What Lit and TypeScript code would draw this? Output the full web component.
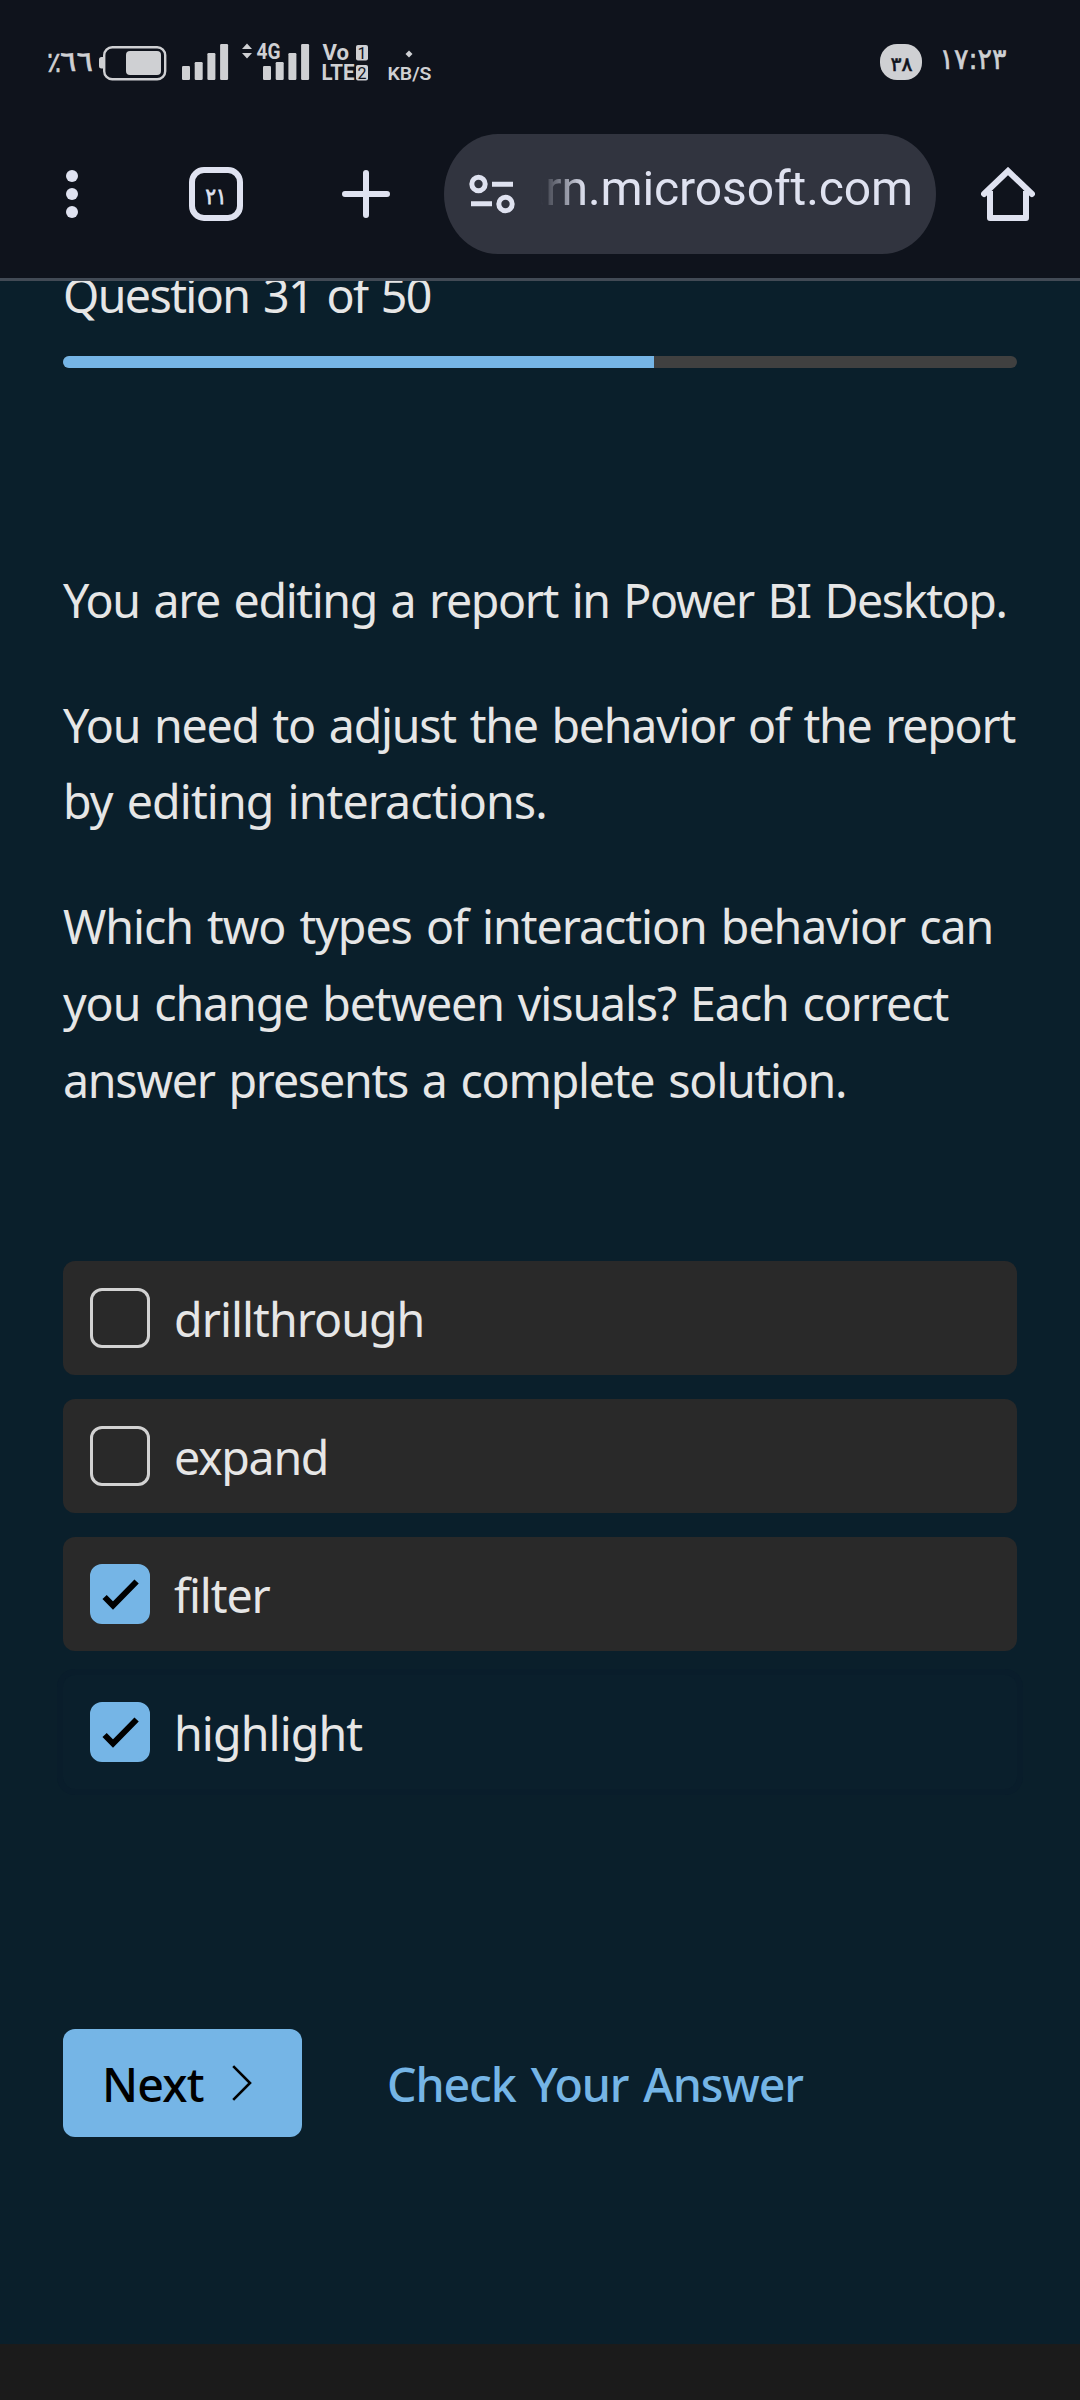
import { LitElement, html, css, svg } from "lit";
import { classMap } from "lit/directives/class-map.js";

interface Line { text: string; spacing: number; }
interface Option extends Line { checked: boolean; focused?: boolean; }

const QUESTION: Line[][] = [
  [{ text: "You are editing a report in Power BI Desktop.", spacing: -1.38 }],
  [
    { text: "You need to adjust the behavior of the report", spacing: -1.25 },
    { text: "by editing interactions.", spacing: -0.9 },
  ],
  [
    { text: "Which two types of interaction behavior can", spacing: -1.03 },
    { text: "you change between visuals? Each correct", spacing: -1.11 },
    { text: "answer presents a complete solution.", spacing: -1.24 },
  ],
];

const OPTIONS: Option[] = [
  { text: "drillthrough", spacing: -0.95, checked: false },
  { text: "expand", spacing: -1.3, checked: false },
  { text: "filter", spacing: -1.1, checked: true },
  { text: "highlight", spacing: -0.88, checked: true, focused: true },
];

class StatusBar extends LitElement {
  static styles = css`
    :host { display: block; height: 120px; }
    svg { display: block; }
    .ink { fill: #cfd0d3; }
    .line { fill: none; stroke: #cfd0d3; stroke-width: 2.4; }
    .dark { fill: #0f131c; }
    text { font-family: Roboto, "Liberation Sans", sans-serif; }
    .digits { font-family: "DejaVu Sans", sans-serif; }
    .heavy { stroke: #cfd0d3; stroke-width: 0.6; }
    .dark.digits { stroke: #0f131c; stroke-width: 0.6; }
    .bold { font-weight: 700; }
    .medium { font-weight: 600; }
  `;

  private bars(x: number) {
    const tops = [66, 62, 53, 44];
    return tops.map((top, i) => svg`<rect class="ink" x=${x + i * 12.7} y=${top} width="8" height=${80 - top} rx="1.2"/>`);
  }

  render() {
    return html`<svg width="1080" height="120" viewBox="0 0 1080 120">
      <g class="ink">
        <text class="digits heavy" x="47" y="72" font-size="28" textLength="14" lengthAdjust="spacingAndGlyphs">٪</text>
        <text class="digits heavy" x="60" y="70.500" font-size="28" textLength="33" lengthAdjust="spacingAndGlyphs">٦٦</text>
        <path d="M103 57h-1.500a2.500 2.500 0 0 0-2.500 2.500v6.500a2.500 2.500 0 0 0 2.500 2.500h1.500z"/>
        <rect x="126" y="51" width="35" height="24" rx="4"/>
        <path d="M242 49l5-5.500 5 5.500zM242 53h10l-5 5.500z"/>
        <text class="bold" x="256.500" y="59" font-size="21.500" textLength="24" lengthAdjust="spacingAndGlyphs">4G</text>
        <text class="bold" x="322.500" y="60" font-size="21.500" textLength="26.500" lengthAdjust="spacingAndGlyphs">Vo</text>
        <text class="bold" x="321.500" y="80" font-size="21.500" textLength="33" lengthAdjust="spacingAndGlyphs">LTE</text>
        <rect x="356" y="45" width="12" height="15.500" rx="2"/>
        <rect x="356" y="65" width="12" height="15.500" rx="2"/>
        <path d="M409 50.500l3.500 3.500-3.500 3.500-3.500-3.500z"/>
        <text class="medium" x="387.500" y="79.500" font-size="19" textLength="44" lengthAdjust="spacingAndGlyphs">KB/S</text>
        <rect x="880" y="44" width="42" height="36" rx="17"/>
        <text class="digits heavy" x="939.500" y="69" font-size="29" textLength="67" lengthAdjust="spacingAndGlyphs">١٧:٢٣</text>
      </g>
      <rect class="line" x="104.200" y="47.200" width="61" height="32" rx="8"/>
      ${this.bars(182)} ${this.bars(263)}
      <text class="dark" x="362" y="58.500" font-size="16" text-anchor="middle">1</text>
      <text class="dark" x="362" y="78.500" font-size="16" text-anchor="middle">2</text>
      <text class="dark digits" x="890.500" y="71" font-size="20" textLength="22" lengthAdjust="spacingAndGlyphs">٣٨</text>
    </svg>`;
  }
}
customElements.define("status-bar", StatusBar);

class BrowserBar extends LitElement {
  static styles = css`
    :host {
      box-sizing: border-box; display: flex; align-items: flex-start;
      height: 161px; padding-top: 14px; border-bottom: 3px solid #424a55;
    }
    .icon { height: 120px; display: flex; align-items: center; }
    svg { display: block; fill: none; stroke: #dfe2f0; stroke-width: 6; }
    .solid { fill: #dfe2f0; stroke: none; }
    .menu { margin-left: 66px; }
    .tabs { margin-left: 111px; }
    .plus { margin-left: 99px; }
    .pill {
      box-sizing: border-box; width: 492px; height: 120px; margin-left: 54px; padding-left: 24px;
      display: flex; align-items: center; background: #31343f; border-radius: 54px / 60px;
    }
    .tune { stroke-width: 5; }
    .url {
      width: 372px; margin-left: 25px; padding-bottom: 10px; overflow: hidden;
      display: flex; justify-content: flex-end; white-space: nowrap;
      font: 48px/60px Roboto, "Liberation Sans", sans-serif; letter-spacing: -0.1px; color: #dfe2f0;
      -webkit-mask-image: linear-gradient(to right, transparent 0, #000 44px);
      mask-image: linear-gradient(to right, transparent 0, #000 44px);
    }
    .home { margin-left: 45px; }
    .count { font: 22px "DejaVu Sans", sans-serif; fill: #dfe2f0; stroke: #dfe2f0; stroke-width: 0.8; }
  `;
  render() {
    return html`
      <div class="icon menu"><svg class="solid" width="12" height="54" viewBox="0 0 12 54">
        <circle cx="6" cy="9" r="6"/><circle cx="6" cy="27" r="6"/><circle cx="6" cy="45" r="6"/></svg></div>
      <div class="icon tabs"><svg width="54" height="54" viewBox="0 0 54 54">
        <rect x="3" y="3" width="48" height="48" rx="12"/>
        <text class="count" x="16.500" y="36.500" textLength="21" lengthAdjust="spacingAndGlyphs">٢١</text></svg></div>
      <div class="icon plus"><svg width="48" height="48" viewBox="0 0 48 48">
        <path stroke-linecap="round" d="M24 3v42M3 24h42"/></svg></div>
      <div class="pill">
        <svg class="tune" width="48" height="40" viewBox="0 0 48 40">
          <circle cx="10.500" cy="10" r="6.700"/><circle cx="37.500" cy="30" r="6.700"/>
          <path d="M24 10.200h21M3 29.800h21"/></svg>
        <div class="url">arn.microsoft.com</div>
      </div>
      <div class="icon home"><svg width="54" height="54" viewBox="0 0 54 54">
        <path stroke-linejoin="round" d="M9 24v27h36V24"/>
        <path stroke-linecap="round" d="M3 27L27 4 51 27"/></svg></div>`;
  }
}
customElements.define("browser-bar", BrowserBar);

class AnswerOption extends LitElement {
  static properties = { option: { attribute: false } };
  declare option: Option;
  static styles = css`
    :host { display: block; }
    .card {
      box-sizing: border-box; height: 114px; padding-left: 27px; border-radius: 12px;
      display: flex; align-items: center; gap: 24px; background: #292929;
    }
    .focused { background: #0a1f2c; box-shadow: 0 0 0 6px #091d2b; }
    .box {
      box-sizing: border-box; width: 60px; height: 60px; border: 3px solid #d2d2d2; border-radius: 12px;
    }
    .checked { border-color: #75b5e6; background: #75b5e6; }
    svg { display: block; width: 54px; height: 54px; fill: none; stroke: #000; stroke-width: 6; }
    .label { padding-top: 4px; white-space: nowrap; }
  `;
  render() {
    const o = this.option;
    return html`<div class=${classMap({ card: true, focused: !!o.focused })}>
      <div class=${classMap({ box: true, checked: o.checked })}>
        ${o.checked ? html`<svg viewBox="0 0 54 54"><path d="M11.600 30l8.400 8.500L43.600 14.500"/></svg>` : ""}
      </div>
      <div class="label" style="letter-spacing:${o.spacing}px">${o.text}</div>
    </div>`;
  }
}
customElements.define("answer-option", AnswerOption);

class AppRoot extends LitElement {
  static styles = css`
    :host {
      display: flex; flex-direction: column; width: 1080px; height: 2400px; overflow: hidden;
      background: #0f131c; color: #e6e6e6;
      font: 46.5px/76.8px "Noto Sans", "Open Sans", sans-serif; word-spacing: 3px;
    }
    main { flex: 1; overflow: hidden; padding: 0 63px; background: #0a1f2b; }
    .count { margin-top: -24px; letter-spacing: -1.6px; }
    .track { height: 12px; margin-top: 22.2px; border-radius: 6px; overflow: hidden; background: #404040; }
    .fill { height: 100%; background: #75b5e6; }
    .question { display: flex; flex-direction: column; gap: 48px; margin-top: 193.8px; }
    .line { white-space: nowrap; }
    .options { display: grid; gap: 24px; margin-top: 142.2px; }
    .actions { display: flex; align-items: center; margin-top: 240px; font-weight: 500; }
    .next {
      box-sizing: border-box; width: 239px; height: 108px; padding-left: 39px; border-radius: 12px;
      display: flex; align-items: center; background: #75b5e6; color: #000; letter-spacing: -0.8px;
    }
    .next span { width: 102px; padding-top: 4px; }
    .next svg { margin-left: 28px; fill: none; stroke: #000; stroke-width: 2.6; }
    .check { margin-left: 85px; padding-top: 4px; color: #75b5e6; letter-spacing: -1.1px; word-spacing: 4px; }
    footer { height: 56px; background: #1b1b1b; }
  `;
  render() {
    return html`
      <status-bar></status-bar>
      <browser-bar></browser-bar>
      <main>
        <div class="count">Question 31 of 50</div>
        <div class="track"><div class="fill" style="width:62%"></div></div>
        <div class="question">
          ${QUESTION.map((p) => html`<div>${p.map((l) => html`<div class="line" style="letter-spacing:${l.spacing}px">${l.text}</div>`)}</div>`)}
        </div>
        <div class="options">${OPTIONS.map((o) => html`<answer-option .option=${o}></answer-option>`)}</div>
        <div class="actions">
          <div class="next"><span>Next</span><svg width="20" height="36" viewBox="0 0 20 36"><path d="M1.200 1.200L18 18 1.200 34.800"/></svg></div>
          <div class="check">Check Your Answer</div>
        </div>
      </main>
      <footer></footer>`;
  }
}
customElements.define("app-root", AppRoot);
